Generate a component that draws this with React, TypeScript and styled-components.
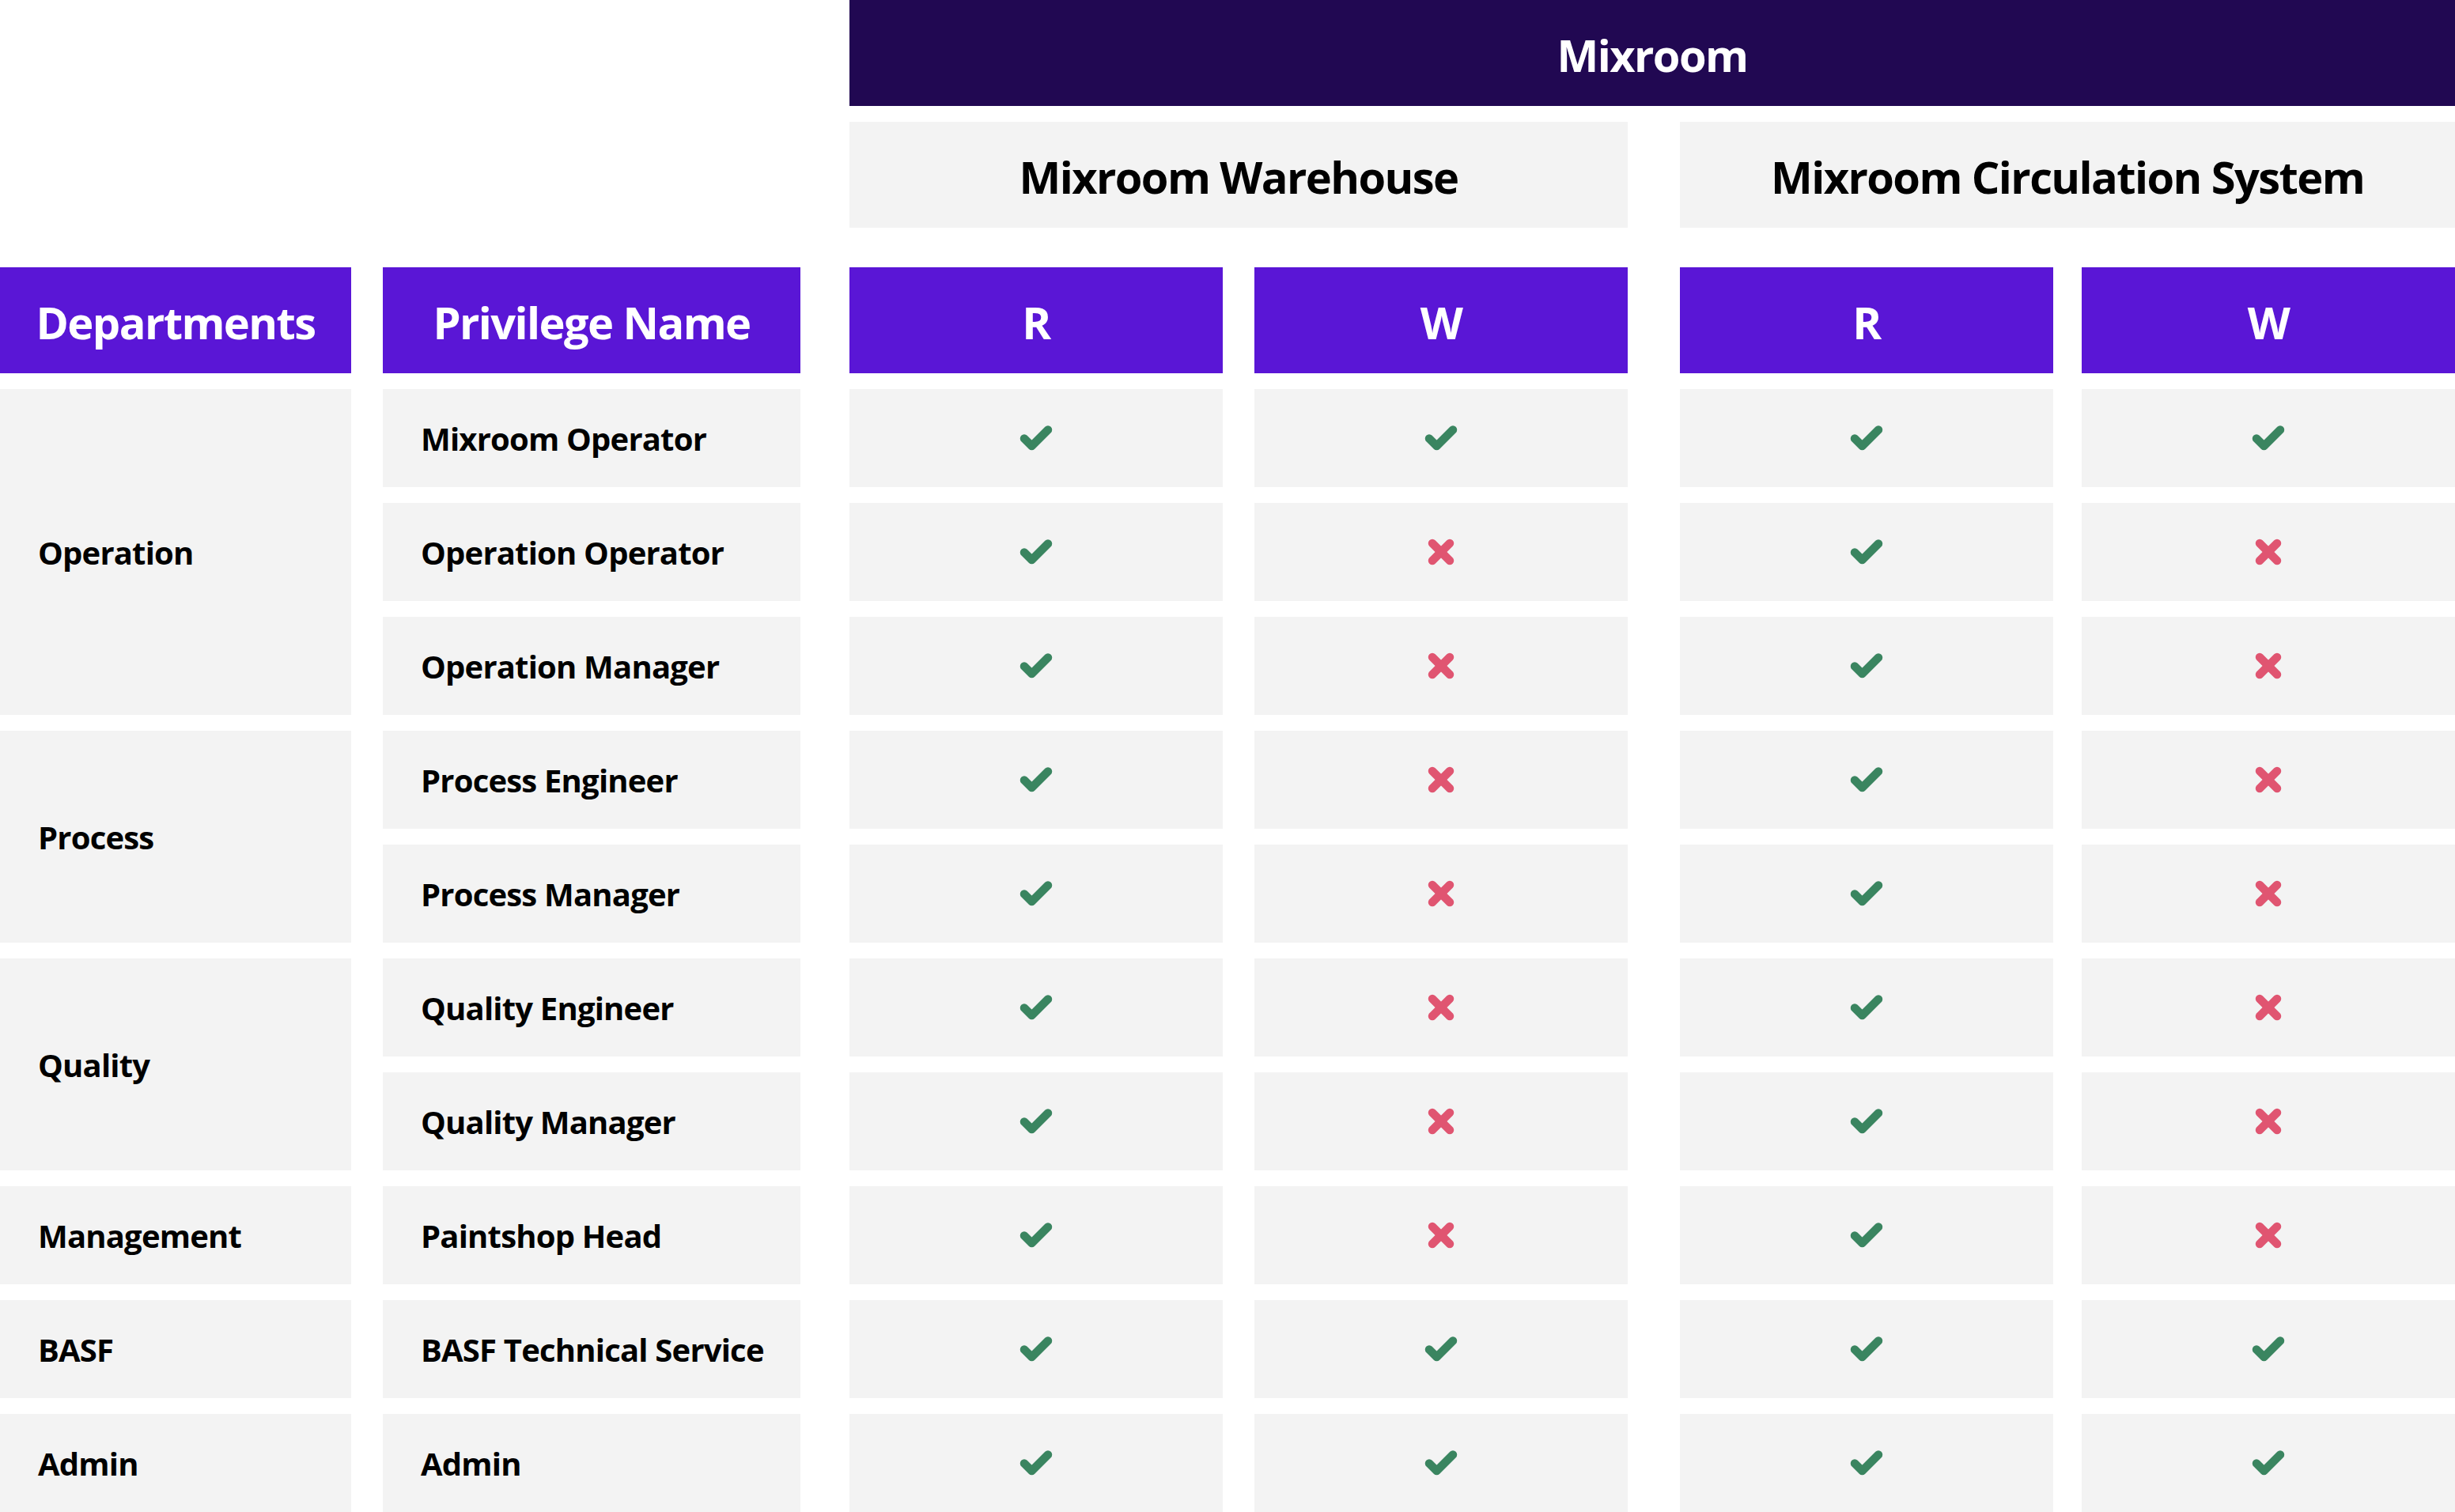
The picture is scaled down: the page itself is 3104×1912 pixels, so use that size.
import React from 'react';
import styled, { createGlobalStyle } from 'styled-components';

type Privilege = {
    name: string;
    write: boolean;
};

type Department = {
    name: string;
    privileges: Privilege[];
};

const departments: Department[] = [
    {
        name: 'Operation',
        privileges: [
            { name: 'Mixroom Operator', write: true },
            { name: 'Operation Operator', write: false },
            { name: 'Operation Manager', write: false },
        ],
    },
    {
        name: 'Process',
        privileges: [
            { name: 'Process Engineer', write: false },
            { name: 'Process Manager', write: false },
        ],
    },
    {
        name: 'Quality',
        privileges: [
            { name: 'Quality Engineer', write: false },
            { name: 'Quality Manager', write: false },
        ],
    },
    { name: 'Management', privileges: [{ name: 'Paintshop Head', write: false }] },
    { name: 'BASF', privileges: [{ name: 'BASF Technical Service', write: true }] },
    { name: 'Admin', privileges: [{ name: 'Admin', write: true }] },
];

// grid columns: dept, gap, privilege, gap, WR, gap, WW, gap, CR, gap, CW
const permissionCols = [5, 7, 9, 11];
const FIRST_BODY_ROW = 5;

const GlobalStyle = createGlobalStyle`
    html, body {
        margin: 0;
        padding: 0;
        background: #ffffff;
        overflow: hidden;
    }
    body {
        font-family: "Open Sans", "Noto Sans", "Liberation Sans", sans-serif;
    }
`;

const CheckIcon = () => (
    <svg width="42" height="32" viewBox="0 0 42 32">
        <polyline
            points="6,16.5 15.5,26 36,5.5"
            fill="none"
            stroke="#3a8560"
            strokeWidth="10.5"
            strokeLinecap="round"
            strokeLinejoin="round"
        />
    </svg>
);

const CrossIcon = () => (
    <svg width="34" height="34" viewBox="0 0 34 34">
        <g stroke="#e05571" strokeWidth="10.5" strokeLinecap="round">
            <line x1="6" y1="6" x2="28" y2="28" />
            <line x1="28" y1="6" x2="6" y2="28" />
        </g>
    </svg>
);

const App = (): JSX.Element => {
    let row = FIRST_BODY_ROW;

    return (
        <>
            <GlobalStyle />
            <Matrix>
                <ModuleTitle>Mixroom</ModuleTitle>
                <SubModule $col="5 / 8">Mixroom Warehouse</SubModule>
                <SubModule $col="9 / 12">Mixroom Circulation System</SubModule>

                <HeadCell $col={1}>Departments</HeadCell>
                <HeadCell $col={3}>Privilege Name</HeadCell>
                {['R', 'W', 'R', 'W'].map((label, i) => (
                    <HeadCell key={i} $col={permissionCols[i]}>
                        {label}
                    </HeadCell>
                ))}

                {departments.map((dept) => {
                    const start = row;
                    row += dept.privileges.length;
                    return (
                        <React.Fragment key={dept.name}>
                            <DeptCell $rowStart={start} $span={dept.privileges.length}>
                                {dept.name}
                            </DeptCell>
                            {dept.privileges.map((p, i) => (
                                <React.Fragment key={p.name}>
                                    <NameCell $row={start + i}>{p.name}</NameCell>
                                    {[true, p.write, true, p.write].map((ok, j) => (
                                        <MarkCell key={j} $row={start + i} $col={permissionCols[j]}>
                                            {ok ? <CheckIcon /> : <CrossIcon />}
                                        </MarkCell>
                                    ))}
                                </React.Fragment>
                            ))}
                        </React.Fragment>
                    );
                })}
            </Matrix>
        </>
    );
};

const Matrix = styled.div`
    display: grid;
    width: 3104px;
    grid-template-columns: 444px 40px 528px 62px 472px 40px 472px 66px 472px 36px 472px;
    grid-template-rows: 134px 134px 10px 134px repeat(10, 124px);
    row-gap: 20px;
`;

const ModuleTitle = styled.div`
    grid-column: 5 / 12;
    grid-row: 1;
    display: flex;
    align-items: center;
    justify-content: center;
    padding-top: 4px;
    background-color: #210852;
    color: #ffffff;
    font-size: 56px;
    font-weight: 700;
    letter-spacing: -1.6px;
`;

const SubModule = styled.div<{ $col: string }>`
    grid-column: ${(p) => p.$col};
    grid-row: 2;
    display: flex;
    align-items: center;
    justify-content: center;
    padding-top: 4px;
    background-color: #f3f3f3;
    color: #000000;
    font-size: 56px;
    font-weight: 700;
    letter-spacing: -1.6px;
`;

const HeadCell = styled.div<{ $col: number }>`
    grid-column: ${(p) => p.$col};
    grid-row: 4;
    display: flex;
    align-items: center;
    justify-content: center;
    padding-top: 4px;
    background-color: #5a16d6;
    color: #ffffff;
    font-size: 56px;
    font-weight: 700;
    letter-spacing: -1.6px;
`;

const BodyCell = styled.div`
    display: flex;
    align-items: center;
    background-color: #f3f3f3;
    color: #000000;
    font-size: 40px;
    font-weight: 700;
    letter-spacing: -0.8px;
`;

const DeptCell = styled(BodyCell)<{ $rowStart: number; $span: number }>`
    grid-column: 1;
    grid-row: ${(p) => `${p.$rowStart} / span ${p.$span}`};
    padding-left: 48px;
`;

const NameCell = styled(BodyCell)<{ $row: number }>`
    grid-column: 3;
    grid-row: ${(p) => p.$row};
    padding-left: 48px;
`;

const MarkCell = styled(BodyCell)<{ $row: number; $col: number }>`
    grid-column: ${(p) => p.$col};
    grid-row: ${(p) => p.$row};
    justify-content: center;

    svg {
        display: block;
    }
`;

export default App;
